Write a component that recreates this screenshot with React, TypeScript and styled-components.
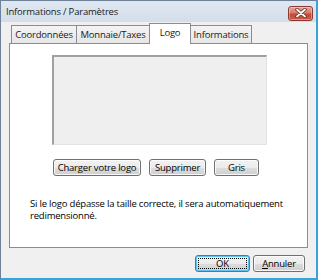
import React from 'react';
import styled, { createGlobalStyle } from 'styled-components';

const Global = createGlobalStyle`
  html, body { margin: 0; padding: 0; background: #ffffff; }
  body {
    font-family: "Open Sans", "Noto Sans", sans-serif;
    font-size: 9.5px;
    letter-spacing: -0.2px;
    color: #000;
  }
  * { box-sizing: border-box; }
`;

const Window = styled.div`
  width: 318px;
  height: 280px;
  display: flex;
  flex-direction: column;
  background: #f0f0f0;
  border-left: 1px solid #6f8196;
  border-top: 1px solid #6f8196;
  border-right: 2px solid #3aa3d9;
  border-bottom: 2px solid #3aa3d9;
`;

const TitleBar = styled.div`
  height: 21px;
  display: flex;
  align-items: center;
  justify-content: space-between;
  padding: 0 3px 0 5px;
  background: linear-gradient(#dfe8f2, #d3deeb);
`;

const Title = styled.span`
  font-size: 9.5px;
  color: #1a1a1a;
  white-space: nowrap;
`;

const CloseButton = styled.div`
  width: 25px;
  height: 15px;
  margin-top: 3px;
  border: 1px solid #8a3a30;
  border-radius: 3px;
  background: linear-gradient(#e6a59b 0%, #d67a6c 45%, #c24a39 55%, #c9594a 100%);
  display: flex;
  align-items: center;
  justify-content: center;
  box-shadow: inset 0 0 0 1px rgba(255, 255, 255, 0.35);
`;

const Client = styled.div`
  flex: 1;
  display: flex;
  flex-direction: column;
  padding: 1px 8px 0 8px;
`;

const TabRow = styled.div`
  height: 20px;
  display: flex;
  align-items: flex-end;
  padding-left: 2px;
  position: relative;
  z-index: 1;
`;

const Tab = styled.div<{ $w: number; $active?: boolean }>`
  width: ${(p) => p.$w}px;
  height: ${(p) => (p.$active ? 21 : 18)}px;
  margin-left: -1px;
  margin-bottom: ${(p) => (p.$active ? -1 : 0)}px;
  border: 1px solid #898c95;
  border-bottom: none;
  background: ${(p) => (p.$active ? '#ffffff' : 'linear-gradient(#f4f4f4, #e6e6e6)')};
  display: flex;
  align-items: ${(p) => (p.$active ? 'flex-start' : 'center')};
  justify-content: center;
  padding-top: ${(p) => (p.$active ? 2 : 0)}px;
  white-space: nowrap;
  color: #1a1a1a;
  &:first-child { margin-left: 0; }
`;

const Panel = styled.div`
  height: 205px;
  background: #ffffff;
  border: 1px solid #898c95;
  display: flex;
  flex-direction: column;
  padding: 11px 0 0 0;
`;

const LogoBox = styled.div`
  width: 215px;
  height: 90px;
  margin-left: 42px;
  background: #efefef;
  border-top: 2px solid #a0a0a0;
  border-left: 2px solid #a0a0a0;
  border-right: 1px solid #e3e3e3;
  border-bottom: 1px solid #e3e3e3;
`;

const ButtonRow = styled.div`
  display: flex;
  gap: 8px;
  margin: 14px 0 0 43px;
`;

const Button = styled.div<{ $w: number; $default?: boolean }>`
  width: ${(p) => p.$w}px;
  height: 17px;
  border: 1px solid ${(p) => (p.$default ? '#3c7fb1' : '#707070')};
  border-radius: 3px;
  background: linear-gradient(#f2f2f2 0%, #ebebeb 50%, #dddddd 51%, #cfcfcf 100%);
  box-shadow: inset 0 0 0 1px ${(p) => (p.$default ? '#5ec3f0' : 'rgba(255,255,255,0.8)')};
  display: flex;
  align-items: center;
  justify-content: center;
  white-space: nowrap;
  position: relative;
`;

const FocusRect = styled.div`
  position: absolute;
  inset: 2px;
  border: 1px dotted #000;
`;

const Info = styled.p`
  margin: 22px 0 0 20px;
  line-height: 12px;
`;

const Footer = styled.div`
  height: 30px;
  display: flex;
  justify-content: flex-end;
  align-items: flex-start;
  gap: 3px;
  padding: 7px 3px 0 0;
`;

const Accel = styled.span`
  text-decoration: underline;
`;

export default function App() {
  return (
    <>
      <Global />
      <Window>
        <TitleBar>
          <Title>Informations / Paramètres</Title>
          <CloseButton>
            <svg width="12" height="10" viewBox="0 0 12 10">
              <path d="M2 1.5 L10 8.5 M10 1.5 L2 8.5" stroke="#6b2a22" strokeWidth="3.4" strokeLinecap="round" />
              <path d="M2 1.5 L10 8.5 M10 1.5 L2 8.5" stroke="#ffffff" strokeWidth="1.8" strokeLinecap="round" />
            </svg>
          </CloseButton>
        </TitleBar>
        <Client>
          <TabRow>
            <Tab $w={66}>Coordonnées</Tab>
            <Tab $w={74}>Monnaie/Taxes</Tab>
            <Tab $w={42} $active>Logo</Tab>
            <Tab $w={62}>Informations</Tab>
          </TabRow>
          <Panel>
            <LogoBox />
            <ButtonRow>
              <Button $w={88}>Charger votre logo</Button>
              <Button $w={57}>Supprimer</Button>
              <Button $w={45}>Gris</Button>
            </ButtonRow>
            <Info>
              Si le logo dépasse la taille correcte, il sera automatiquement
              <br />
              redimensionné.
            </Info>
          </Panel>
          <Footer>
            <Button $w={55} $default>
              OK
              <FocusRect />
            </Button>
            <Button $w={52}>
              <Accel>A</Accel>nnuler
            </Button>
          </Footer>
        </Client>
      </Window>
    </>
  );
}
